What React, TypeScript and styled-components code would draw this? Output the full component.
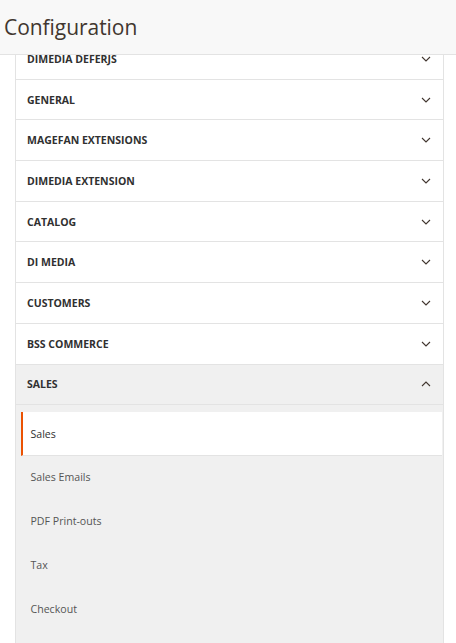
import React from "react";
import styled, { createGlobalStyle } from "styled-components";

const GlobalStyle = createGlobalStyle`
    html, body {
        margin: 0;
        padding: 0;
        background: #ffffff;
        font-family: "Open Sans", "Noto Sans", sans-serif;
    }
`;

const sections = [
    "DIMEDIA DEFERJS",
    "GENERAL",
    "MAGEFAN EXTENSIONS",
    "DIMEDIA EXTENSION",
    "CATALOG",
    "DI MEDIA",
    "CUSTOMERS",
    "BSS COMMERCE",
];

const salesLinks = ["Sales", "Sales Emails", "PDF Print-outs", "Tax", "Checkout"];

const Chevron = ({ up }: { up?: boolean }) => (
    <ChevronIcon width="10" height="6" viewBox="0 0 10 6" $up={up}>
        <polyline points="1,1 5,5 9,1" fill="none" stroke="#41362f" strokeWidth="1.1" />
    </ChevronIcon>
);

const App = () => {
    return (
        <Page>
            <GlobalStyle />
            <Header>
                <Title>Configuration</Title>
            </Header>
            <Viewport>
                <Panel>
                    {sections.map((title) => (
                        <SectionRow key={title}>
                            <SectionTitle>{title}</SectionTitle>
                            <Chevron />
                        </SectionRow>
                    ))}
                    <SectionRow $open>
                        <SectionTitle>SALES</SectionTitle>
                        <Chevron up />
                    </SectionRow>
                    <SubList>
                        {salesLinks.map((link, i) => (
                            <SubItem key={link} $active={i === 0}>
                                {link}
                            </SubItem>
                        ))}
                    </SubList>
                </Panel>
            </Viewport>
        </Page>
    );
};

const Page = styled.div`
    display: flex;
    flex-direction: column;
    height: 643px;
    overflow: hidden;
`;

const Header = styled.header`
    flex: 0 0 auto;
    height: 54px;
    display: flex;
    align-items: center;
    padding: 0 0 0 4px;
    background: #f8f8f8;
    border-bottom: 1px solid #e3e3e3;
    position: relative;
    z-index: 1;
`;

const Title = styled.h1`
    margin: 0 0 1px;
    font-size: 21px;
    font-weight: 400;
    color: #41362f;
    letter-spacing: -0.05px;
`;

const Viewport = styled.div`
    flex: 1 1 auto;
    overflow: hidden;
`;

const Panel = styled.div`
    margin: -16px 0 0 15px;
    width: 427px;
    border-left: 1px solid #e3e3e3;
    border-right: 1px solid #e3e3e3;
    background: #f0f0f0;
    min-height: 700px;
`;

const SectionRow = styled.div<{ $open?: boolean }>`
    height: 39.7px;
    display: flex;
    align-items: center;
    justify-content: space-between;
    padding: 0 12px 0 11px;
    background: ${(p) => (p.$open ? "#f0f0f0" : "#ffffff")};
    border-bottom: 1px solid #e3e3e3;
`;

const SectionTitle = styled.span`
    font-size: 10.5px;
    font-weight: 700;
    color: #303030;
`;

const ChevronIcon = styled.svg<{ $up?: boolean }>`
    display: block;
    transform: ${(p) => (p.$up ? "rotate(180deg)" : "none")};
`;

const SubList = styled.ul`
    list-style: none;
    margin: 0;
    padding: 7px 1px 0 5px;
`;

const SubItem = styled.li<{ $active?: boolean }>`
    height: 42.75px;
    display: flex;
    align-items: center;
    padding-left: ${(p) => (p.$active ? "7.5px" : "9.5px")};
    font-size: 10.6px;
    color: ${(p) => (p.$active ? "#303030" : "#555555")};
    background: ${(p) => (p.$active ? "#ffffff" : "transparent")};
    border-left: ${(p) => (p.$active ? "2px solid #eb5202" : "none")};
    border-bottom: 1px solid ${(p) => (p.$active ? "#e3e3e3" : "transparent")};
`;

export default App;
